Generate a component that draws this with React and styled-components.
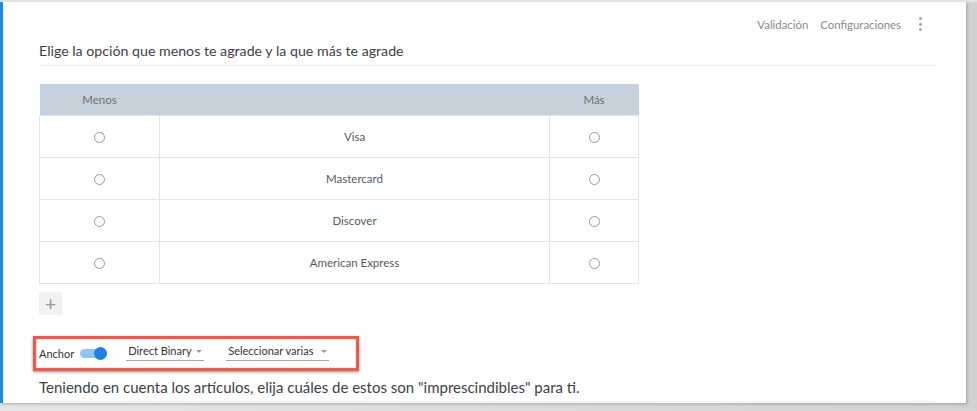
import React from 'react';
import styled, { createGlobalStyle } from 'styled-components';

const GlobalStyle = createGlobalStyle`
  html, body {
    margin: 0;
    padding: 0;
    background: #ffffff;
    font-family: Lato, "Open Sans", sans-serif;
  }
`;

const rows = ['Visa', 'Mastercard', 'Discover', 'American Express'];

const App = () => {
  return (
    <>
      <GlobalStyle />
      <Page>
        <Panel>
          <Toolbar>
            <ToolLink>Validación</ToolLink>
            <ToolLink>Configuraciones</ToolLink>
            <Kebab>
              <span />
              <span />
              <span />
            </Kebab>
          </Toolbar>
          <Question $size={14.2}>Elige la opción que menos te agrade y la que más te agrade</Question>
          <Grid>
            <thead>
              <tr>
                <HeadCell $width={120}>Menos</HeadCell>
                <HeadCell $width={390} />
                <HeadCell $width={89}>Más</HeadCell>
              </tr>
            </thead>
            <tbody>
              {rows.map((label) => (
                <tr key={label}>
                  <Cell>
                    <Radio />
                  </Cell>
                  <Cell>{label}</Cell>
                  <Cell>
                    <Radio />
                  </Cell>
                </tr>
              ))}
            </tbody>
          </Grid>
          <AddButton>+</AddButton>
          <OptionsBar>
            <Label>Anchor</Label>
            <Toggle>
              <Knob />
            </Toggle>
            <Dropdown $width={78}>
              Direct Binary
              <Caret />
            </Dropdown>
            <Dropdown $width={103}>
              Seleccionar varias
              <Caret />
            </Dropdown>
          </OptionsBar>
          <Question $next $size={15}>
            Teniendo en cuenta los artículos, elija cuáles de estos son "imprescindibles" para ti.
          </Question>
        </Panel>
      </Page>
    </>
  );
};

export default App;

const Page = styled.div`
  width: 977px;
  height: 411px;
  box-sizing: border-box;
  padding: 2px 11px 8px 0;
  background: linear-gradient(90deg, #e6e6e6, #d2d2d2);
  overflow: hidden;
  position: relative;
  &::before {
    content: '';
    position: absolute;
    top: 0;
    left: 0;
    right: 0;
    height: 2px;
    background: #e3e3e3;
  }
`;

const Panel = styled.div`
  height: 100%;
  box-sizing: border-box;
  background: #ffffff;
  border-left: 3px solid #1e88e5;
  padding: 0 31px 0 36px;
  box-shadow: 1px 1px 3px rgba(0, 0, 0, 0.25);
  display: flex;
  flex-direction: column;
  align-items: flex-start;
`;

const Toolbar = styled.div`
  align-self: stretch;
  display: flex;
  justify-content: flex-end;
  align-items: center;
  gap: 12px;
  height: 20px;
  margin-top: 12px;
  padding-right: 13px;
`;

const ToolLink = styled.span`
  font-size: 11.4px;
  color: #8a8a8a;
`;

const Kebab = styled.span`
  display: flex;
  flex-direction: column;
  gap: 2.5px;
  margin-left: 6px;
  span {
    width: 3px;
    height: 3px;
    border-radius: 50%;
    background: #a8a8a8;
  }
`;

const Question = styled.div`
  align-self: stretch;
  font-size: ${(p) => p.$size}px;
  color: #3e4146;
  line-height: 20px;
  padding-bottom: 4px;
  border-bottom: 1px solid #ececec;
  margin-top: ${(p) => (p.$next ? '6px' : '7px')};
`;

const Grid = styled.table`
  margin-top: 18px;
  border-collapse: collapse;
  width: 599px;
  table-layout: fixed;
  font-size: 11.5px;
  color: #555a60;
`;

const HeadCell = styled.th`
  width: ${(p) => p.$width}px;
  height: 31px;
  padding: 0;
  background: #c5d2db;
  font-weight: normal;
  color: #6a7178;
  text-align: center;
`;

const Cell = styled.td`
  height: 41px;
  padding: 0;
  border: 1px solid #dfe5ea;
  text-align: center;
  vertical-align: middle;
`;

const Radio = styled.span`
  display: inline-block;
  width: 9px;
  height: 9px;
  border-radius: 50%;
  border: 1px solid #9a9a9a;
  vertical-align: middle;
`;

const AddButton = styled.div`
  margin-top: 8px;
  width: 23px;
  height: 23px;
  background: #f1f1f1;
  border-radius: 2px;
  color: #9a9a9a;
  font-size: 20px;
  line-height: 22px;
  text-align: center;
`;

const OptionsBar = styled.div`
  margin: 21px 0 0 -6px;
  width: 317px;
  height: 29px;
  border: 3px solid #e85b4e;
  box-shadow: 0 1px 3px rgba(0, 0, 0, 0.45), inset 0 0 2px rgba(0, 0, 0, 0.35);
  display: flex;
  align-items: center;
  padding-left: 3px;
`;

const Label = styled.span`
  font-size: 11px;
  color: #333;
`;

const Toggle = styled.span`
  position: relative;
  margin-left: 6px;
  width: 24px;
  height: 9px;
  border-radius: 5px;
  background: #90c4f5;
`;

const Knob = styled.span`
  position: absolute;
  right: -3px;
  top: -2px;
  width: 13px;
  height: 13px;
  border-radius: 50%;
  background: #1e80e0;
`;

const Dropdown = styled.span`
  position: relative;
  margin-left: 22px;
  width: ${(p) => p.$width}px;
  box-sizing: border-box;
  padding: 0 0 3px 2px;
  border-bottom: 1px solid #a8a8a8;
  font-size: 11px;
  color: #333;
  margin-top: -3px;
`;

const Caret = styled.span`
  position: absolute;
  right: 2px;
  top: 6px;
  border-left: 3px solid transparent;
  border-right: 3px solid transparent;
  border-top: 3px solid #999;
`;
